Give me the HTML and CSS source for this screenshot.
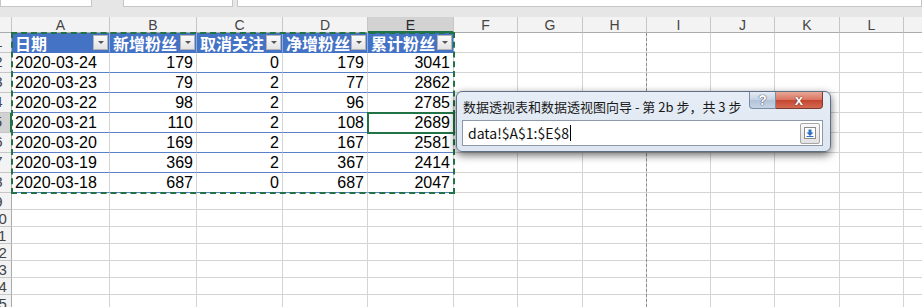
FILE: index.html
```html
<!DOCTYPE html>
<html lang="zh-CN">
<head>
    <meta charset="UTF-8">
    <title>数据透视表向导</title>
    <link rel="stylesheet" href="styles.css">
</head>
<body>
    <div class="top">
        <div class="box namebox"></div>
        <div class="box tools"></div>
        <div class="box formula"></div>
    </div>

    <div class="sheet" id="sheet"></div>

    <div class="pagebreak"></div>
    <div class="ants"></div>
    <div class="active"></div>

    <div class="dialog">
        <div class="titlebar">
            <div class="title">数据透视表和数据透视图向导 - 第 2b 步，共 3 步</div>
            <div class="caption">
                <div class="cap-help">?</div>
                <div class="cap-close">x</div>
            </div>
        </div>
        <div class="field">
            <span class="ref">data!$A$1:$E$8</span><span class="caret"></span>
            <div class="collapse">
                <svg width="12" height="12" viewBox="0 0 12 12">
                    <rect x="0.5" y="0.5" width="11" height="11" fill="#fff" stroke="#8a8a8a"/>
                    <path d="M4.5 2.5h3v3h2l-3.5 3.5l-3.5-3.5h2z" fill="#2f6fc4"/>
                    <path d="M2.5 9.5h7" stroke="#2f6fc4"/>
                </svg>
            </div>
        </div>
    </div>

    <script>
        const cols = ['A', 'B', 'C', 'D', 'E', 'F', 'G', 'H', 'I', 'J', 'K', 'L', 'M'];
        const rows = [
            ['日期', '新增粉丝', '取消关注', '净增粉丝', '累计粉丝'],
            ['2020-03-24', 179, 0, 179, 3041],
            ['2020-03-23', 79, 2, 77, 2862],
            ['2020-03-22', 98, 2, 96, 2785],
            ['2020-03-21', 110, 2, 108, 2689],
            ['2020-03-20', 169, 2, 167, 2581],
            ['2020-03-19', 369, 2, 367, 2414],
            ['2020-03-18', 687, 0, 687, 2047]
        ];

        const sheet = document.getElementById('sheet');
        let html = '<div class="cell col-head corner"></div>';
        cols.forEach(c => {
            html += `<div class="cell col-head${c === 'E' ? ' sel' : ''}">${c}</div>`;
        });

        for (let r = 1; r <= 15; r++) {
            html += `<div class="cell row-head${r === 5 ? ' sel' : ''}">${r}</div>`;
            const row = rows[r - 1];
            cols.forEach((c, i) => {
                if (row && i < 5) {
                    if (r === 1) {
                        html += `<div class="cell hd"><span>${row[i]}</span><i class="filter"></i></div>`;
                    } else {
                        html += `<div class="cell tb${i > 0 ? ' num' : ''}">${row[i]}</div>`;
                    }
                } else {
                    html += '<div class="cell"></div>';
                }
            });
        }
        sheet.innerHTML = html;
    </script>
</body>
</html>
```

FILE: styles.css
```css
* {
    box-sizing: border-box;
}
body {
    margin: 0;
    width: 922px;
    height: 307px;
    overflow: hidden;
    position: relative;
    background: #fff;
    font-family: "Liberation Sans", Arial, sans-serif;
}

/* formula bar strip */
.top {
    height: 17px;
    background: #e6e6e6;
    display: flex;
    align-items: flex-start;
}
.top .box {
    height: 7px;
    background: #fff;
    border: 1px solid #c6c6c6;
    border-top: 0;
}
.namebox {
    width: 92px;
}
.tools {
    width: 110px;
    margin-left: 31px;
}
.formula {
    flex: 1;
    margin-left: 4px;
}

/* grid */
.sheet {
    display: grid;
    grid-template-columns: 26px 98px 87px 86px 85px 86px 64px 65px 64px 64px 64px 65px 64px 64px;
    grid-template-rows: 16px repeat(8, 20px) repeat(7, 17px);
    margin-left: -14px;
}
.cell {
    border-right: 1px solid #d4d4d4;
    border-bottom: 1px solid #d4d4d4;
    font-size: 16px;
    line-height: 20px;
    padding: 0 3px;
    white-space: nowrap;
    overflow: hidden;
    color: #000;
}
.col-head {
    background: #f3f3f3;
    border-right-color: #c6c6c6;
    border-bottom-color: #ababab;
    text-align: center;
    font-size: 14px;
    line-height: 16px;
    color: #444;
}
.col-head.sel {
    background: #d2d2d2;
    border-bottom: 2px solid #217346;
    color: #262626;
}
.row-head {
    background: #f3f3f3;
    border-right-color: #ababab;
    border-bottom-color: #c6c6c6;
    text-align: center;
    font-size: 15px;
    line-height: 18px;
    color: #444;
    padding: 0;
}
.row-head.sel {
    background: #d2d2d2;
    border-right: 2px solid #217346;
}

/* table */
.hd {
    background: #4472c4;
    color: #fff;
    font-family: "Noto Sans CJK SC", sans-serif;
    font-weight: bold;
    font-size: 16px;
    line-height: 18px;
    display: flex;
    align-items: center;
    justify-content: space-between;
    padding: 0 1px 0 3px;
    border-right-color: #8faadc;
    border-bottom-color: #4472c4;
}
.hd span {
    overflow: hidden;
}
.filter {
    flex: none;
    width: 15px;
    height: 15px;
    position: relative;
    background: linear-gradient(#fbfbfb, #e3e3e3);
    border: 1px solid #b4b4b4;
}
.filter::after {
    content: "";
    position: absolute;
    left: 4px;
    top: 5px;
    border-left: 3px solid transparent;
    border-right: 3px solid transparent;
    border-top: 3px solid #555;
}
.tb {
    border-bottom-color: #5b7fc8;
}
.num {
    text-align: right;
}

/* overlays */
.pagebreak {
    position: absolute;
    left: 646px;
    top: 33px;
    bottom: 0;
    border-left: 1px dashed #8c8c8c;
}
.ants {
    position: absolute;
    left: 11px;
    top: 32px;
    width: 444px;
    height: 162px;
    border: 2px dashed #217346;
}
.active {
    position: absolute;
    left: 367px;
    top: 112px;
    width: 88px;
    height: 22px;
    border: 2px solid #217346;
}

/* wizard dialog */
.dialog {
    position: absolute;
    left: 456px;
    top: 91px;
    width: 375px;
    height: 61px;
    border: 1px solid #5f6f84;
    border-radius: 6px;
    background: linear-gradient(#e6edf6, #dde6f1);
    box-shadow: 0 3px 9px rgba(0, 0, 0, 0.6);
    font-family: "Noto Sans CJK SC", sans-serif;
}
.titlebar {
    display: flex;
    height: 28px;
}
.title {
    padding: 7px 0 0 6px;
    font-size: 13px;
    line-height: 16px;
    color: #1a1a1a;
}
.caption {
    display: flex;
    margin-left: auto;
    margin-right: 7px;
    height: 17px;
}
.cap-help, .cap-close {
    height: 17px;
    color: #fff;
    font-weight: bold;
    text-align: center;
    font-family: "Liberation Sans", Arial, sans-serif;
}
.cap-help {
    width: 27px;
    font-size: 14px;
    line-height: 16px;
    background: linear-gradient(#e4ebf4, #c4d2e3 50%, #b2c3d9 51%, #c6d4e6);
    border: 1px solid #7b8ba2;
    border-top: 0;
    border-radius: 0 0 0 4px;
    text-shadow: 0 0 1px #334, 0 0 1px #334;
}
.cap-close {
    width: 47px;
    font-size: 15px;
    line-height: 15px;
    background: linear-gradient(#eaa797, #d9735f 50%, #c5452f 51%, #d46a52);
    border: 1px solid #7c3a30;
    border-top: 0;
    border-left: 0;
    border-radius: 0 0 4px 0;
    text-shadow: 0 0 1px #5a1a12, 0 0 1px #5a1a12;
}
.field {
    margin-left: 5px;
    width: 361px;
    height: 26px;
    background: #fff;
    border: 1px solid #8d99a8;
    display: flex;
    align-items: center;
    padding-left: 5px;
}
.ref {
    font-size: 14px;
    color: #111;
}
.caret {
    width: 1px;
    height: 16px;
    background: #000;
    margin-left: 1px;
}
.collapse {
    margin-left: auto;
    margin-right: 2px;
    width: 20px;
    height: 21px;
    border: 1px solid #a6a6a6;
    border-radius: 2px;
    background: linear-gradient(#f9f9f9, #e2e2e2);
    display: flex;
    align-items: center;
    justify-content: center;
}
```
